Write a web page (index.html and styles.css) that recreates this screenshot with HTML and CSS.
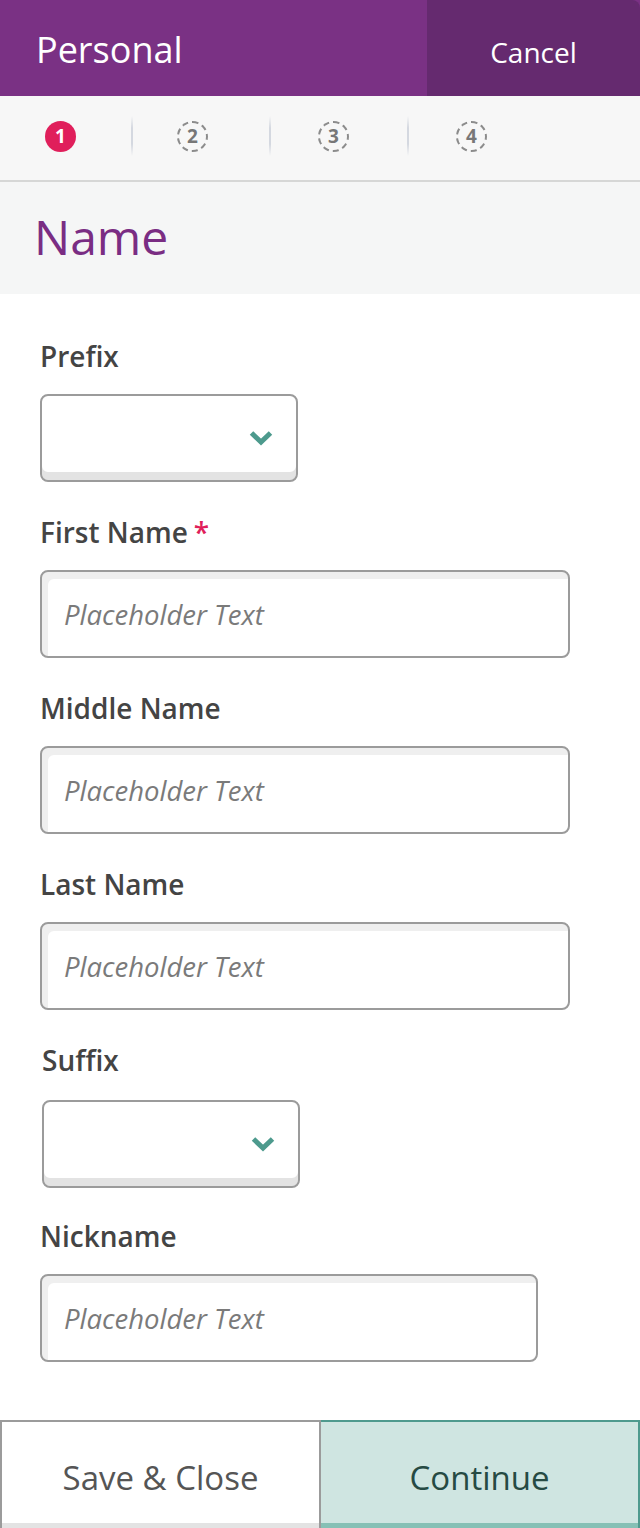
FILE: index.html
```html
<!DOCTYPE html>
<html lang="en">
<head>
<meta charset="utf-8">
<title>Personal - Name</title>
<link rel="stylesheet" href="styles.css">
</head>
<body>
<div class="page">
  <header class="topbar">
    <div class="topbar-title">Personal</div>
    <button class="topbar-cancel" type="button">Cancel</button>
  </header>

  <nav class="stepper">
    <div class="step-cell step-cell-first"><span class="step step-active">1</span></div>
    <div class="step-cell step-cell-second"><span class="step step-todo">2</span></div>
    <div class="step-cell"><span class="step step-todo">3</span></div>
    <div class="step-cell step-cell-last"><span class="step step-todo">4</span></div>
  </nav>

  <section class="section-head">
    <h1 class="section-title">Name</h1>
  </section>

  <form class="form">
    <div class="group">
      <label class="label">Prefix</label>
      <div class="select select-short">
        <svg class="chevron" width="24" height="16" viewBox="0 0 24 16"><polyline points="2.5,3 12,12 21.5,3" fill="none" stroke="#4d9a8d" stroke-width="5"/></svg>
      </div>
    </div>

    <div class="group">
      <label class="label">First Name<span class="req">*</span></label>
      <input class="text-input" type="text" placeholder="Placeholder Text">
    </div>

    <div class="group">
      <label class="label">Middle Name</label>
      <input class="text-input" type="text" placeholder="Placeholder Text">
    </div>

    <div class="group">
      <label class="label">Last Name</label>
      <input class="text-input" type="text" placeholder="Placeholder Text">
    </div>

    <div class="group group-shift">
      <label class="label">Suffix</label>
      <div class="select select-short select-shift">
        <svg class="chevron" width="24" height="16" viewBox="0 0 24 16"><polyline points="2.5,3 12,12 21.5,3" fill="none" stroke="#4d9a8d" stroke-width="5"/></svg>
      </div>
    </div>

    <div class="group group-last">
      <label class="label">Nickname</label>
      <input class="text-input text-input-narrow" type="text" placeholder="Placeholder Text">
    </div>
  </form>

  <footer class="actions">
    <button class="action action-secondary" type="button">Save &amp; Close</button>
    <button class="action action-primary" type="button">Continue</button>
  </footer>
</div>
</body>
</html>
```

FILE: styles.css
```css
* { box-sizing: border-box; }

html, body {
  margin: 0;
  padding: 0;
  background: #ffffff;
}

body {
  font-family: "Open Sans", "Noto Sans", "Liberation Sans", sans-serif;
  color: #444;
}

.page {
  width: 640px;
  height: 1528px;
  overflow: hidden;
}

/* Top bar */
.topbar {
  display: flex;
  height: 96px;
  background: #7a3184;
}

.topbar-title {
  flex: 1;
  padding: 4px 0 0 36px;
  font-size: 36px;
  line-height: 92px;
  color: #ffffff;
}

.topbar-cancel {
  width: 213px;
  border: 0;
  margin: 0;
  padding: 8px 0 0 0;
  background: #652a6f;
  border-top-right-radius: 8px;
  color: #ffffff;
  font-family: inherit;
  font-size: 28px;
  font-weight: 400;
  line-height: 88px;
  text-align: center;
}

/* Stepper */
.stepper {
  display: flex;
  align-items: center;
  height: 86px;
  padding-bottom: 4px;
  background: #f7f7f7;
  border-bottom: 2px solid #d6d7d6;
}

.step-cell {
  position: relative;
  display: flex;
  align-items: center;
  width: 138px;
  height: 40px;
  padding-left: 47px;
}

.step-cell-first {
  width: 133px;
  padding-left: 45px;
}

.step-cell-second { padding-left: 44px; }

.step-cell::after {
  content: "";
  position: absolute;
  right: 0;
  top: 0;
  width: 2px;
  height: 40px;
  background: linear-gradient(to bottom, rgba(214,218,226,0) 0%, #d4d8e0 30%, #d4d8e0 70%, rgba(214,218,226,0) 100%);
}

.step-cell-last::after { display: none; }

.step {
  display: flex;
  align-items: center;
  justify-content: center;
  width: 31px;
  height: 31px;
  border-radius: 50%;
  font-size: 19px;
  font-weight: 700;
  line-height: 1;
}

.step-active {
  background: #e01f5b;
  color: #ffffff;
}

.step-todo {
  border: 2px dashed #8c8c8c;
  color: #777777;
}

/* Section head */
.section-head {
  height: 112px;
  background: #f5f6f6;
  padding-left: 34px;
}

.section-title {
  margin: 0;
  font-size: 48px;
  font-weight: 400;
  line-height: 110px;
  color: #7a2d83;
}

/* Form */
.form {
  padding: 46px 0 24px 40px;
}

.group {
  display: flex;
  flex-direction: column;
  align-items: flex-start;
  margin-bottom: 34px;
}

.group-last { margin-bottom: 34px; }

.group-shift { padding-left: 2px; }

.label {
  display: block;
  margin-bottom: 22px;
  font-size: 28px;
  font-weight: 600;
  line-height: 32px;
  color: #444444;
}

.req {
  margin-left: 6px;
  color: #e01f5b;
}

.select {
  display: flex;
  align-items: center;
  justify-content: flex-end;
  height: 88px;
  padding-right: 23px;
  border: 2px solid #9b9b9b;
  border-radius: 8px;
  background: #ffffff;
  box-shadow: inset 0 -8px 0 #e3e3e3;
}

.select-short { width: 258px; }

.select-shift {
  margin-top: 2px;
  margin-bottom: -2px;
}

.chevron { display: block; }

.text-input {
  display: block;
  width: 530px;
  height: 88px;
  margin: 0;
  padding: 0 0 0 22px;
  border: 2px solid #9b9b9b;
  border-radius: 8px;
  background: #ffffff;
  box-shadow: inset 6px 7px 0 #efefef;
  font-family: inherit;
  font-size: 27.5px;
  font-style: italic;
  color: #444;
  outline: none;
}

.text-input-narrow { width: 498px; }

.text-input::placeholder {
  color: #7a7a7a;
  font-style: italic;
  opacity: 1;
}

/* Actions */
.actions {
  display: flex;
  height: 108px;
}

.action {
  flex: 1;
  margin: 0;
  padding: 4px 0 0 0;
  font-family: inherit;
  font-size: 33px;
  font-weight: 500;
  line-height: 1;
}

.action-secondary {
  border: 2px solid #9b9b9b;
  border-bottom: 0;
  background: #ffffff;
  box-shadow: inset 0 -5px 0 #e3e3e3;
  color: #555555;
}

.action-primary {
  border: 2px solid #4f9a8e;
  border-left: 0;
  border-bottom: 0;
  background: #cfe5e1;
  box-shadow: inset 0 -5px 0 #86c0b5;
  color: #264a43;
}
```
